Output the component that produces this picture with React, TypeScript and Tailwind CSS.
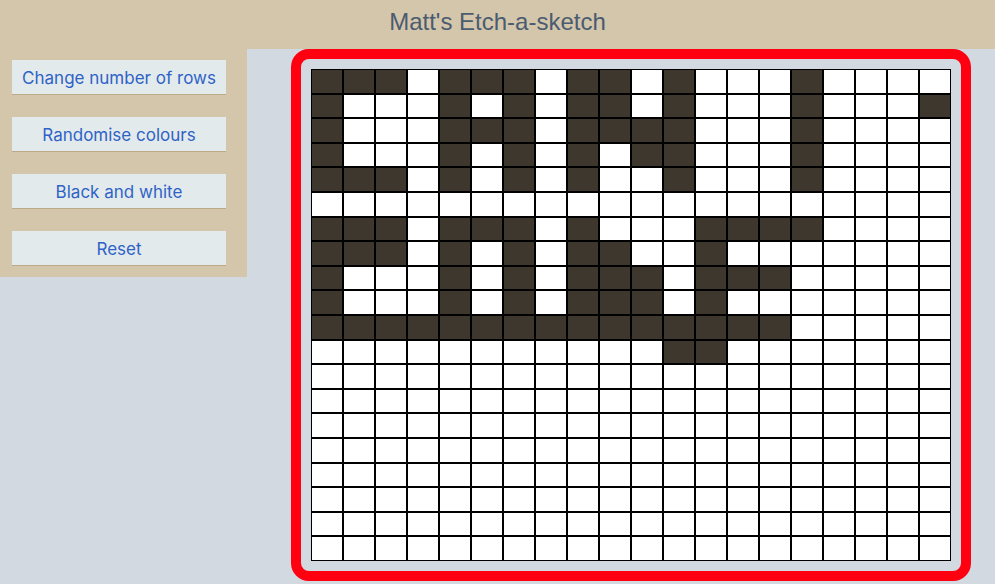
import React, { useState } from "react";

// 20x20 board, 1 = inked cell
const PATTERN = [
  "11101110110100010000",
  "10001010110100010001",
  "10001110111100010000",
  "10001010101100010000",
  "11101010100100010000",
  "00000000000000000000",
  "11101110100011110000",
  "11101010110010000000",
  "10001010111011100000",
  "10001010111010000000",
  "11111111111111100000",
  "00000000000110000000",
  "00000000000000000000",
  "00000000000000000000",
  "00000000000000000000",
  "00000000000000000000",
  "00000000000000000000",
  "00000000000000000000",
  "00000000000000000000",
  "00000000000000000000",
];

const BUTTONS = ["Change number of rows", "Randomise colours", "Black and white", "Reset"];

const App: React.FC = () => {
  const [cells, setCells] = useState<boolean[]>(() =>
    PATTERN.join("").split("").map((c) => c === "1")
  );

  const ink = (i: number) =>
    setCells((prev) => {
      if (prev[i]) return prev;
      const next = prev.slice();
      next[i] = true;
      return next;
    });

  return (
    <div className="min-h-screen bg-[#d2d9e0] font-['Liberation_Sans',Arial,sans-serif]">
      {/* Cabecera */}
      <header className="h-[49px] bg-[#d4c6ab] pt-[4px] text-center text-[24px] leading-normal text-[#4b5b70]">
        Matt's Etch-a-sketch
      </header>

      <div className="flex items-start">
        {/* Controles */}
        <aside className="flex w-[247px] flex-col gap-[22px] bg-[#d4c6ab] pb-[11px] pl-[12px] pr-[21px] pt-[11px]">
          {BUTTONS.map((label) => (
            <button
              key={label}
              type="button"
              className="h-[35px] w-[214px] border-b border-[#bba987] bg-[#e3eaec] pt-[4px] font-['Inter',sans-serif] text-[17px] text-[#2e63c6]"
            >
              {label}
            </button>
          ))}
        </aside>

        {/* Tablero */}
        <main className="ml-[44px]">
          <div className="rounded-[18px] border-[10px] border-[#ff0010] p-[10px]">
            <div className="grid h-[492px] w-[640px] grid-cols-[repeat(20,32px)] grid-rows-[repeat(20,1fr)]">
              {cells.map((on, i) => (
                <div
                  key={i}
                  onMouseEnter={() => ink(i)}
                  className={`border border-black ${on ? "bg-[#3e372e]" : "bg-white"}`}
                />
              ))}
            </div>
          </div>
        </main>
      </div>
    </div>
  );
};

export default App;
